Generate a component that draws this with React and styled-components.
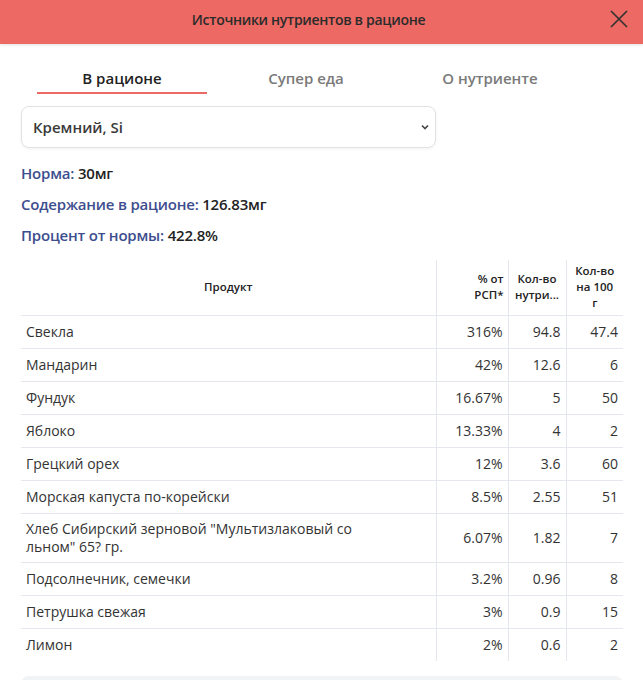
import React from 'react'
import styled, { createGlobalStyle } from 'styled-components'

const Global = createGlobalStyle`
  body {
    margin: 0;
    background: #fff;
    font-family: "Open Sans", "Noto Sans", sans-serif;
    color: #222;
  }
`

const Page = styled.div`
  width: 643px;
  height: 680px;
  overflow: hidden;
  background: #fff;
`

const Header = styled.div`
  height: 44px;
  background: #ec6a63;
  display: grid;
  grid-template-columns: 1fr auto 1fr;
  align-items: center;
  box-shadow: 0 1px 3px rgba(0, 0, 0, 0.12);
`

const Title = styled.div`
  grid-column: 2;
  margin-bottom: 6px;
  padding-right: 26px;
  font-size: 14px;
  font-weight: 600;
  letter-spacing: -0.3px;
  color: #2b2b2b;
`

const Close = styled.button`
  justify-self: end;
  margin-right: 12px;
  margin-bottom: 6px;
  width: 24px;
  height: 24px;
  padding: 0;
  border: 0;
  background: none;
  display: flex;
  align-items: center;
  justify-content: center;
`

const Body = styled.div`
  padding: 16px 20px 0 21px;
`

const Tabs = styled.div`
  display: flex;
  gap: 14px;
  padding-left: 16px;
`

const Tab = styled.div`
  width: 170px;
  height: 34px;
  box-sizing: border-box;
  text-align: center;
  font-size: 15px;
  font-weight: 600;
  line-height: 36px;
  color: ${p => (p.$active ? '#222' : '#7a7a7a')};
  border-bottom: 2px solid ${p => (p.$active ? '#ec6a63' : 'transparent')};
`

const Select = styled.div`
  margin-top: 12px;
  width: 415px;
  height: 42px;
  box-sizing: border-box;
  border: 1px solid #e2e2e2;
  border-radius: 8px;
  box-shadow: 0 1px 3px rgba(0, 0, 0, 0.06);
  display: flex;
  align-items: center;
  justify-content: space-between;
  padding: 0 5px 0 11px;
  font-size: 15px;
  font-weight: 600;
  color: #3a3a3a;
`

const Info = styled.div`
  margin-top: 15px;
  display: flex;
  flex-direction: column;
  gap: 10px;
`

const InfoLine = styled.div`
  font-size: 15px;
  font-weight: 600;
  line-height: 21px;
  letter-spacing: -0.2px;
  color: #222;
`

const Label = styled.span`
  color: #3d4e8e;
`

const Table = styled.table`
  margin-top: 14px;
  width: 602px;
  border-collapse: collapse;
  table-layout: fixed;
  font-size: 14px;
  color: #333;
`

const Th = styled.th`
  width: ${p => p.$w}px;
  height: 55px;
  box-sizing: border-box;
  padding: 0 4px;
  font-size: 11.5px;
  font-weight: 600;
  line-height: 16px;
  color: #222;
  text-align: ${p => p.$align || 'center'};
  vertical-align: middle;
  border-bottom: 1px solid #e4e7ee;
  & + & {
    border-left: 1px solid #e4e7ee;
  }
`

const Tr = styled.tr`
  border-bottom: 1px solid #e4e7ee;
  &:last-child {
    border-bottom: 0;
  }
`

const Td = styled.td`
  height: 33px;
  box-sizing: border-box;
  padding: 6px 5px;
  line-height: 18px;
  text-align: ${p => p.$align || 'right'};
  vertical-align: middle;
  & + & {
    border-left: 1px solid #e4e7ee;
  }
`

const NameTd = styled(Td)`
  text-align: left;
  padding-right: 40px;
`

const Footer = styled.div`
  margin-top: 15px;
  height: 40px;
  border-radius: 8px;
  background: #f2f3f5;
`

const rows = [
  ['Свекла', '316%', '94.8', '47.4'],
  ['Мандарин', '42%', '12.6', '6'],
  ['Фундук', '16.67%', '5', '50'],
  ['Яблоко', '13.33%', '4', '2'],
  ['Грецкий орех', '12%', '3.6', '60'],
  ['Морская капуста по-корейски', '8.5%', '2.55', '51'],
  ['Хлеб Сибирский зерновой "Мультизлаковый со льном" 65? гр.', '6.07%', '1.82', '7'],
  ['Подсолнечник, семечки', '3.2%', '0.96', '8'],
  ['Петрушка свежая', '3%', '0.9', '15'],
  ['Лимон', '2%', '0.6', '2'],
]

export default function App() {
  return (
    <Page>
      <Global />
      <Header>
        <Title>Источники нутриентов в рационе</Title>
        <Close>
          <svg width="20" height="20" viewBox="0 0 20 20">
            <path d="M2 2L18 18M18 2L2 18" stroke="#333" strokeWidth="1.7" />
          </svg>
        </Close>
      </Header>
      <Body>
        <Tabs>
          <Tab $active>В рационе</Tab>
          <Tab>Супер еда</Tab>
          <Tab>О нутриенте</Tab>
        </Tabs>
        <Select>
          Кремний, Si
          <svg width="10" height="10" viewBox="0 0 10 10">
            <path d="M2 3.5L5 6.5L8 3.5" fill="none" stroke="#444" strokeWidth="1.6" />
          </svg>
        </Select>
        <Info>
          <InfoLine><Label>Норма:</Label> 30мг</InfoLine>
          <InfoLine><Label>Содержание в рационе:</Label> 126.83мг</InfoLine>
          <InfoLine><Label>Процент от нормы:</Label> 422.8%</InfoLine>
        </Info>
        <Table>
          <thead>
            <tr>
              <Th $w={415}>Продукт</Th>
              <Th $w={72} $align="right">% от<br />РСП*</Th>
              <Th $w={58}>Кол-во<br />нутри...</Th>
              <Th $w={57}>Кол-во<br />на 100<br />г</Th>
            </tr>
          </thead>
          <tbody>
            {rows.map(r => (
              <Tr key={r[0]}>
                <NameTd>{r[0]}</NameTd>
                <Td>{r[1]}</Td>
                <Td>{r[2]}</Td>
                <Td>{r[3]}</Td>
              </Tr>
            ))}
          </tbody>
        </Table>
        <Footer />
      </Body>
    </Page>
  )
}
